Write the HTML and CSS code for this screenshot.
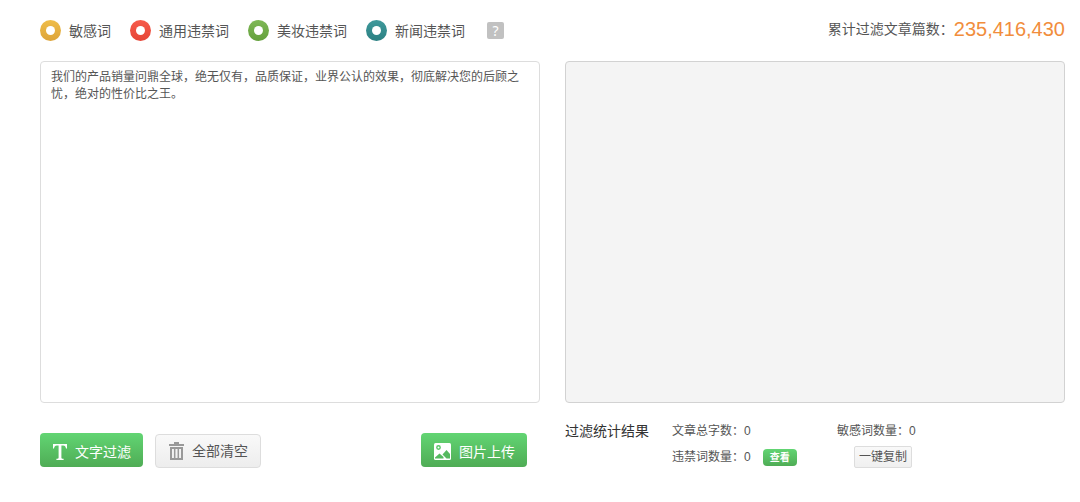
FILE: index.html
```html
<!DOCTYPE html>
<html lang="zh-CN">
<head>
	<meta charset="UTF-8">
	<title>违禁词过滤</title>
	<link rel="stylesheet" href="styles.css">
</head>
<body>
<div class="main">

	<div class="top">
		<ul class="types">
			<li><i class="ring yellow"></i>敏感词</li>
			<li><i class="ring red"></i>通用违禁词</li>
			<li><i class="ring green"></i>美妆违禁词</li>
			<li><i class="ring teal"></i>新闻违禁词</li>
		</ul>
		<button type="button" class="help">?</button>
		<p class="total">累计过滤文章篇数：<em>235,416,430</em></p>
	</div>

	<div class="cols">
		<div class="col">
			<textarea class="box" aria-label="文章内容" spellcheck="false">我们的产品销量问鼎全球，绝无仅有，品质保证，业界公认的效果，彻底解决您的后顾之忧，绝对的性价比之王。</textarea>
			<div class="btns">
				<button type="button" class="btn btn-green">
					<svg width="14" height="16" viewBox="0 0 14 16"><path d="M0 0h14v4.500h-1C12.600 2.200 12 1.400 10.200 1.400H8.400v12c0 1 .6 1.300 2.200 1.400V16H3.400v-1.200c1.600-.1 2.200-.4 2.200-1.400v-12H3.800C2 1.400 1.400 2.200 1 4.500H0z" fill="#fff"/></svg>
					<span>文字过滤</span>
				</button>
				<button type="button" class="btn btn-gray">
					<svg width="15" height="18" viewBox="0 0 15 18" fill="none" stroke="#999"><path d="M0 3h15" stroke-width="2"/><path d="M5 1h5" stroke-width="2"/><path d="M2 6h11v11H2z" stroke-width="2"/><path d="M5.700 6v11M9.300 6v11" stroke-width="1.500"/></svg>
					<span>全部清空</span>
				</button>
				<button type="button" class="btn btn-green upload">
					<svg width="17" height="17" viewBox="0 0 17 17"><rect width="17" height="17" rx="1.500" fill="#fff"/><circle cx="4.500" cy="4.500" r="1.700" fill="none" stroke="#58c567" stroke-width="1.400"/><path d="M1 15.500v-1l4.500-4 4 3.500v1.500z" fill="#55b95f"/><path d="M8.500 11.500l4-4.500 3.500 4v4.500h-3.500z" fill="#55b95f"/></svg>
					<span>图片上传</span>
				</button>
			</div>
		</div>

		<div class="col">
			<div class="box result"></div>
			<div class="count">
				<h2>过滤统计结果</h2>
				<ul>
					<li><span>文章总字数：<b>0</b></span></li>
					<li><span>敏感词数量：<b>0</b></span></li>
					<li><span>违禁词数量：<b>0</b></span><button type="button" class="look">查看</button></li>
					<li><button type="button" class="copy">一键复制</button></li>
				</ul>
			</div>
		</div>
	</div>

</div>
</body>
</html>
```
FILE: styles.css
```css
body,ul,li,h2,p,button,textarea { margin:0; padding:0; }
body { background:#fff; color:#555; font-size:14px; font-family:"Liberation Sans", "Noto Sans CJK SC", sans-serif; }
ul,li { list-style:none; }
h2,b,em,i { font-weight:normal; font-style:normal; }
button,textarea { font-family:inherit; color:#555; box-sizing:border-box; }
button { cursor:pointer; }

.main { padding:18px 15px 0 40px; }

/* 顶部 */
.top { display:flex; align-items:center; height:25px; margin-bottom:18px; }
.types { display:flex; gap:19px; }
.types li { display:flex; align-items:center; gap:8px; line-height:20px; }
.ring { width:21px; height:21px; box-sizing:border-box; border-radius:50%; display:flex; }
.ring:after { content:""; width:9px; height:9px; margin:auto; border-radius:50%; background:#fff; }
.yellow { background:linear-gradient(#efbd49, #dda43a); }
.red { background:linear-gradient(#f65a4a, #e64536); }
.green { background:linear-gradient(#7fb856, #64a03c); }
.teal { background:linear-gradient(#3f999b, #2b8082); }
.help { width:17px; height:17px; margin-left:22px; border:none; border-radius:2px; background:#c1c1c1; color:#fff; font-family:"Noto Sans", sans-serif; font-size:14px; line-height:17px; }
.total { margin-left:auto; display:flex; align-items:center; line-height:20px; padding-bottom:4px; }
.total em { color:#f18d3c; font-size:20px; }

/* 左右两栏 */
.cols { display:grid; grid-template-columns:1fr 1fr; gap:25px; }
.box { display:block; width:100%; height:342px; box-sizing:border-box; border:1px solid #ddd; border-radius:4px; padding:7px 10px; font-size:12px; line-height:17px; resize:none; outline:none; }
.result { background:#f4f4f4; border-color:#d2d2d2; }

/* 按钮 */
.btns { display:flex; gap:12px; margin-top:30px; padding-right:13px; }
.btn { display:flex; align-items:center; justify-content:center; gap:8px; height:34px; padding:3px 12px 0 13px; border:none; border-radius:4px; font-size:14px; line-height:20px; }
.btn-green,.look { background:linear-gradient(#62d573, #4fac55); color:#fff; }
.btn-gray { margin-top:1px; padding-top:0; border:1px solid #ddd; background:linear-gradient(#f9f9f9, #ededed); }
.upload { margin-left:auto; }

/* 统计 */
.count { display:flex; gap:23px; margin-top:15px; }
.count h2 { color:#333; font-size:14px; line-height:26px; }
.count ul { flex:1; display:grid; grid-template-columns:165px 1fr; font-size:12px; line-height:18px; }
.count li { display:flex; align-items:center; height:26px; }
.look { width:34px; height:17px; margin-left:12px; border:none; border-radius:4px; font-size:10px; font-weight:bold; line-height:17px; }
.copy { height:22px; margin-left:17px; padding:0 4px; border:1px solid #ddd; border-radius:2px; background:linear-gradient(#f9f9f9, #f0f0f0); font-size:12px; line-height:20px; }
```
